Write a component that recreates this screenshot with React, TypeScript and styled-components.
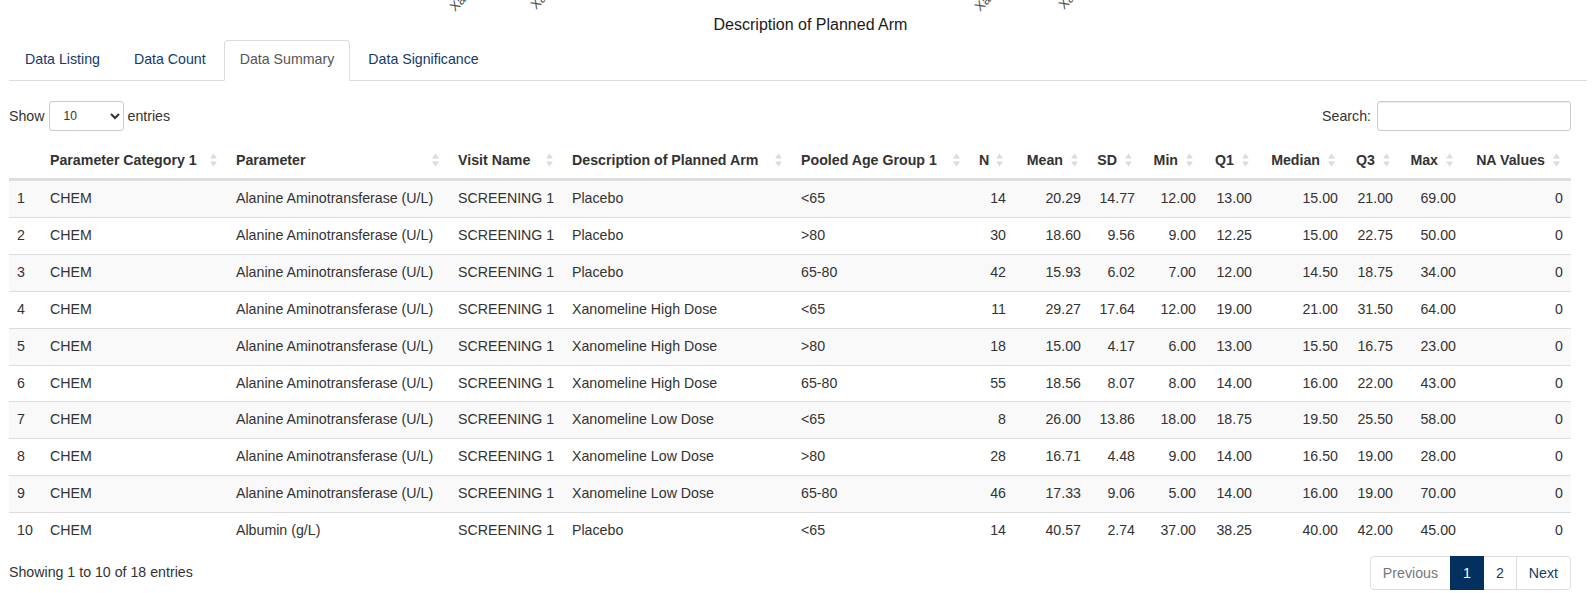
import React from "react";
import styled, { createGlobalStyle } from "styled-components";

const GlobalStyle = createGlobalStyle`
  html, body { margin: 0; padding: 0; background: #ffffff; }
  body {
    font-family: "Liberation Sans", Arial, Helvetica, sans-serif;
    font-size: 14.2px;
    line-height: 20px;
    color: #333333;
  }
  * { box-sizing: border-box; }
`;

const Page = styled.div`
  width: 1593px;
  height: 593px;
  overflow: hidden;
`;

const PlotTail = styled.svg`
  display: block;
`;

const Main = styled.div`
  padding: 0 6px 0 9px;
`;

const TabBar = styled.ul`
  display: flex;
  list-style: none;
  margin: 0;
  padding: 0;
  border-bottom: 1px solid #dddddd;
`;

const Tab = styled.li<{ $active?: boolean }>`
  margin-right: 2px;
  margin-bottom: -1px;
  padding: 8px 15px 11px;
  line-height: 20px;
  border: 1px solid ${(p) => (p.$active ? "#dddddd" : "transparent")};
  border-bottom-color: ${(p) => (p.$active ? "#ffffff" : "transparent")};
  border-radius: 4px 4px 0 0;
  background: ${(p) => (p.$active ? "#ffffff" : "transparent")};
  color: ${(p) => (p.$active ? "#555555" : "#143a6b")};
  cursor: pointer;
`;

const Panel = styled.div`
  margin-right: 16px;
`;

const Controls = styled.div`
  display: flex;
  justify-content: space-between;
  align-items: center;
  margin-top: 20px;
  height: 30px;
`;

const ControlLabel = styled.label`
  display: flex;
  align-items: center;
  gap: 4px;
  white-space: nowrap;
`;

const LengthSelect = styled.select`
  width: 75px;
  height: 30px;
  padding: 5px 8px 5px 10px;
  font-family: inherit;
  font-size: 12px;
  line-height: 1.5;
  color: #333333;
  background: #ffffff;
  border: 1px solid #cccccc;
  border-radius: 3px;
`;

const SearchInput = styled.input`
  width: 194px;
  height: 30px;
  margin-left: 2px;
  padding: 5px 10px;
  font-family: inherit;
  font-size: 12px;
  border: 1px solid #cccccc;
  border-radius: 3px;
  box-shadow: inset 0 1px 1px rgba(0, 0, 0, 0.075);
  outline: none;
`;

const Table = styled.table`
  width: 1562px;
  margin-top: 11px;
  table-layout: fixed;
  border-collapse: separate;
  border-spacing: 0;
`;

const HeadCell = styled.th<{ $align: "left" | "right"; $sortable: boolean }>`
  position: relative;
  padding: 8px ${(p) => (p.$sortable ? "26px" : "8px")} 8px 8px;
  line-height: 20px;
  text-align: ${(p) => p.$align};
  font-weight: bold;
  color: #333333;
  white-space: nowrap;
  border-bottom: 2px solid #dddddd;
  vertical-align: bottom;
`;

const SortIcon = styled.svg`
  position: absolute;
  right: 11px;
  top: 50%;
  transform: translateY(-50%);
`;

const Row = styled.tr<{ $striped: boolean }>`
  background: ${(p) => (p.$striped ? "#f9f9f9" : "#ffffff")};
`;

const Cell = styled.td<{ $align: "left" | "right" }>`
  padding: 8px;
  line-height: 19.9px;
  text-align: ${(p) => p.$align};
  border-top: 1px solid #dddddd;
  white-space: nowrap;
  overflow: hidden;
`;

const Footer = styled.div`
  display: flex;
  justify-content: space-between;
  align-items: flex-start;
  margin-top: 7px;
`;

const Info = styled.div`
  padding-top: 6px;
  line-height: 20px;
`;

const Pager = styled.div`
  display: flex;
`;

const PageButton = styled.span<{
  $active?: boolean;
  $disabled?: boolean;
  $first?: boolean;
  $last?: boolean;
}>`
  display: block;
  padding: 6px 12px;
  line-height: 20px;
  margin-left: ${(p) => (p.$first ? "0" : "-1px")};
  border: 1px solid ${(p) => (p.$active ? "#04305f" : "#dddddd")};
  background: ${(p) => (p.$active ? "#04305f" : "#ffffff")};
  color: ${(p) => (p.$active ? "#ffffff" : p.$disabled ? "#777777" : "#143a6b")};
  border-radius: ${(p) =>
    p.$first ? "4px 0 0 4px" : p.$last ? "0 4px 4px 0" : "0"};
  position: relative;
  z-index: ${(p) => (p.$active ? 2 : 1)};
  cursor: ${(p) => (p.$disabled ? "default" : "pointer")};
`;

type Align = "left" | "right";

const widths = [33, 186, 222, 114, 229, 178, 43, 75, 54, 61, 56, 86, 55, 63, 107];
const headers = [
  "",
  "Parameter Category 1",
  "Parameter",
  "Visit Name",
  "Description of Planned Arm",
  "Pooled Age Group 1",
  "N",
  "Mean",
  "SD",
  "Min",
  "Q1",
  "Median",
  "Q3",
  "Max",
  "NA Values",
];
const aligns: Align[] = headers.map((_, i) => (i >= 6 ? "right" : "left"));

const ALT = "Alanine Aminotransferase (U/L)";
const rows: string[][] = [
  ["1", "CHEM", ALT, "SCREENING 1", "Placebo", "<65", "14", "20.29", "14.77", "12.00", "13.00", "15.00", "21.00", "69.00", "0"],
  ["2", "CHEM", ALT, "SCREENING 1", "Placebo", ">80", "30", "18.60", "9.56", "9.00", "12.25", "15.00", "22.75", "50.00", "0"],
  ["3", "CHEM", ALT, "SCREENING 1", "Placebo", "65-80", "42", "15.93", "6.02", "7.00", "12.00", "14.50", "18.75", "34.00", "0"],
  ["4", "CHEM", ALT, "SCREENING 1", "Xanomeline High Dose", "<65", "11", "29.27", "17.64", "12.00", "19.00", "21.00", "31.50", "64.00", "0"],
  ["5", "CHEM", ALT, "SCREENING 1", "Xanomeline High Dose", ">80", "18", "15.00", "4.17", "6.00", "13.00", "15.50", "16.75", "23.00", "0"],
  ["6", "CHEM", ALT, "SCREENING 1", "Xanomeline High Dose", "65-80", "55", "18.56", "8.07", "8.00", "14.00", "16.00", "22.00", "43.00", "0"],
  ["7", "CHEM", ALT, "SCREENING 1", "Xanomeline Low Dose", "<65", "8", "26.00", "13.86", "18.00", "18.75", "19.50", "25.50", "58.00", "0"],
  ["8", "CHEM", ALT, "SCREENING 1", "Xanomeline Low Dose", ">80", "28", "16.71", "4.48", "9.00", "14.00", "16.50", "19.00", "28.00", "0"],
  ["9", "CHEM", ALT, "SCREENING 1", "Xanomeline Low Dose", "65-80", "46", "17.33", "9.06", "5.00", "14.00", "16.00", "19.00", "70.00", "0"],
  ["10", "CHEM", "Albumin (g/L)", "SCREENING 1", "Placebo", "<65", "14", "40.57", "2.74", "37.00", "38.25", "40.00", "42.00", "45.00", "0"],
];

const axisLabels = [
  { x: 455, y: 12, text: "Xanomeline High Dose" },
  { x: 536, y: 10, text: "Xanomeline Low Dose" },
  { x: 980, y: 12, text: "Xanomeline High Dose" },
  { x: 1064, y: 10, text: "Xanomeline Low Dose" },
];

const Sorter = () => (
  <SortIcon width="7" height="14" viewBox="0 0 7 14" aria-hidden="true">
    <polygon points="0,5.5 3.5,0.5 7,5.5" fill="#dcdcdc" />
    <polygon points="0,8.5 7,8.5 3.5,13.5" fill="#dcdcdc" />
  </SortIcon>
);

const tabs = ["Data Listing", "Data Count", "Data Summary", "Data Significance"];

export default function App() {
  return (
    <Page>
      <GlobalStyle />
      <PlotTail width="1593" height="40" viewBox="0 0 1593 40">
        {axisLabels.map((l, i) => (
          <text
            key={i}
            x={l.x}
            y={l.y}
            transform={`rotate(-45 ${l.x} ${l.y})`}
            fontFamily="Liberation Sans, Arial, sans-serif"
            fontSize="13"
            fill="#4d4d4d"
          >
            {l.text}
          </text>
        ))}
        <text
          x="810.5"
          y="30"
          textAnchor="middle"
          fontFamily="Liberation Sans, Arial, sans-serif"
          fontSize="16"
          fill="#1a1a1a"
        >
          Description of Planned Arm
        </text>
      </PlotTail>
      <Main>
        <TabBar>
          {tabs.map((t) => (
            <Tab key={t} $active={t === "Data Summary"}>
              {t}
            </Tab>
          ))}
        </TabBar>
        <Panel>
          <Controls>
            <ControlLabel>
              Show
              <LengthSelect defaultValue="10">
                <option value="10">10</option>
                <option value="25">25</option>
                <option value="50">50</option>
                <option value="100">100</option>
              </LengthSelect>
              entries
            </ControlLabel>
            <ControlLabel>
              Search:
              <SearchInput type="search" />
            </ControlLabel>
          </Controls>
          <Table>
            <colgroup>
              {widths.map((w, i) => (
                <col key={i} style={{ width: w }} />
              ))}
            </colgroup>
            <thead>
              <tr>
                {headers.map((h, i) => (
                  <HeadCell key={i} $align={aligns[i]} $sortable={i > 0}>
                    {h}
                    {i > 0 && <Sorter />}
                  </HeadCell>
                ))}
              </tr>
            </thead>
            <tbody>
              {rows.map((r, ri) => (
                <Row key={ri} $striped={ri % 2 === 0}>
                  {r.map((c, ci) => (
                    <Cell key={ci} $align={aligns[ci]}>
                      {c}
                    </Cell>
                  ))}
                </Row>
              ))}
            </tbody>
          </Table>
          <Footer>
            <Info>Showing 1 to 10 of 18 entries</Info>
            <Pager>
              <PageButton $first $disabled>
                Previous
              </PageButton>
              <PageButton $active>1</PageButton>
              <PageButton>2</PageButton>
              <PageButton $last>Next</PageButton>
            </Pager>
          </Footer>
        </Panel>
      </Main>
    </Page>
  );
}
